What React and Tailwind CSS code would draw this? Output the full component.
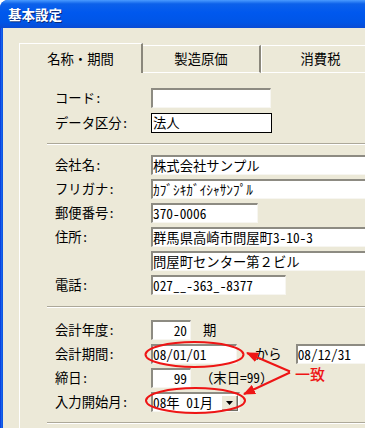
import React from "react";

function Box({ w, children, right = false, flat = false, extra = "" }) {
  const border = flat
    ? "border border-black"
    : "border-t-2 border-l-2 border-r border-b border-t-[#8d8b82] border-l-[#8d8b82] border-r-[#f7f6f1] border-b-[#f7f6f1]";
  return (
    <div
      className={`box-border h-[20px] shrink-0 flex items-center overflow-hidden whitespace-nowrap bg-white leading-none ${border} ${w} ${
        right ? "justify-end pr-[3px]" : flat ? "pl-[1px]" : "pl-0"
      } ${extra}`}
    >
      {children}
    </div>
  );
}

function Row({ label, children }) {
  return (
    <div className="flex items-center h-[20px] pl-[8px] w-[600px]">
      <div className="w-[96px] shrink-0 whitespace-nowrap leading-none">{label}</div>
      {children}
    </div>
  );
}

function Sep({ extra = "" }) {
  return (
    <div className={`h-[2px] border-t border-t-[#aca899] border-b border-b-white w-[400px] ${extra}`} />
  );
}

export default function App() {
  return (
    <div className="relative w-[365px] h-[428px] overflow-hidden bg-white text-black text-[13.33px] font-['Noto_Sans_Mono_CJK_JP','Noto_Sans_CJK_JP',monospace]">
      <div className="flex flex-col h-full rounded-tl-[8px] overflow-hidden bg-[#0a4fe0]">
        <div className="h-[28px] shrink-0 flex items-center pl-[8px] bg-[linear-gradient(to_bottom,#4a9bff_0%,#0c61ea_14%,#0058ee_45%,#0055e6_80%,#0a4bd4_100%)] text-white font-bold text-[13.5px] [text-shadow:1px_1px_0_#0a2a7a]">
          基本設定
        </div>
        <div className="flex flex-1 min-h-0">
          <div className="w-[3px] shrink-0 bg-[linear-gradient(to_right,#0831d9,#1663ea,#0a4fe0)]" />
          <div className="flex-1 min-w-0 bg-[#ece9d8] pl-[16px] pt-[15px] overflow-hidden">
            {/* tabs */}
            <div className="flex items-end h-[30px]">
              <div className="box-border w-[124px] h-[30px] shrink-0 flex items-center justify-center border-t border-l border-white border-r-2 border-r-[#8a877b] bg-[#ece9d8]">
                名称・期間
              </div>
              <div className="box-border w-[118px] h-[28px] shrink-0 flex items-center justify-center border-t border-b border-white border-r-2 border-r-[#8a877b] bg-[#ece9d8]">
                製造原価
              </div>
              <div className="box-border w-[118px] h-[28px] shrink-0 flex items-center justify-center border-t border-b border-l border-white bg-[#ece9d8]">
                消費税
              </div>
            </div>
            {/* panel */}
            <div className="border-l border-white pl-[27px] pt-[15px] h-[400px]">
              <div className="flex flex-col gap-[5px]">
                <Row label="コード:">
                  <Box w="w-[120px]" />
                </Row>
                <Row label="データ区分:">
                  <Box w="w-[121px]" flat>
                    法人
                  </Box>
                </Row>
              </div>
              <Sep extra="mt-[10px]" />
              <div className="flex flex-col gap-[4px] mt-[10px]">
                <Row label="会社名:">
                  <Box w="w-[240px]">株式会社サンプル</Box>
                </Row>
                <Row label="フリガナ:">
                  <Box w="w-[240px]">ｶﾌﾞｼｷｶﾞｲｼｬｻﾝﾌﾟﾙ</Box>
                </Row>
                <Row label="郵便番号:">
                  <Box w="w-[107px]">370-0006</Box>
                </Row>
                <Row label="住所:">
                  <Box w="w-[240px]">群馬県高崎市問屋町3-10-3</Box>
                </Row>
                <Row label="">
                  <Box w="w-[240px]">問屋町センター第２ビル</Box>
                </Row>
                <Row label="電話:">
                  <Box w="w-[135px]">027__-363_-8377</Box>
                </Row>
              </div>
              <Sep extra="mt-[11px]" />
              <div className="flex flex-col gap-[4px] mt-[12px]">
                <Row label="会計年度:">
                  <Box w="w-[40px]" right>
                    20
                  </Box>
                  <span className="ml-[12px] leading-none shrink-0">期</span>
                </Row>
                <Row label="会計期間:">
                  <Box w="w-[86px]">08/01/01</Box>
                  <span className="ml-[18px] leading-none shrink-0 whitespace-nowrap">から</span>
                  <Box w="w-[120px]" extra="ml-[14px]">
                    08/12/31
                  </Box>
                </Row>
                <Row label="締日:">
                  <Box w="w-[40px]" right>
                    99
                  </Box>
                  <span className="ml-[9px] leading-none whitespace-nowrap shrink-0">（末日=99）</span>
                </Row>
                <Row label="入力開始月:">
                  <Box w="w-[89px]" extra="pr-[1px]">
                    <span className="flex-1 leading-none">08年 01月</span>
                    <div className="box-border w-[17px] h-[16px] shrink-0 flex items-center justify-center bg-[#ece9d8] border border-t-white border-l-white border-r-[#716f64] border-b-[#716f64] shadow-[inset_-1px_-1px_0_#aca899]">
                      <svg width="7" height="4" viewBox="0 0 7 4">
                        <path d="M0 0H7L3.5 4Z" fill="#000" />
                      </svg>
                    </div>
                  </Box>
                </Row>
              </div>
              <Sep extra="mt-[10px]" />
            </div>
          </div>
        </div>
      </div>

      {/* annotations */}
      <svg
        className="absolute left-0 top-0 pointer-events-none"
        width="365"
        height="428"
        viewBox="0 0 365 428"
      >
        <defs>
          <marker
            id="ah"
            markerUnits="userSpaceOnUse"
            markerWidth="12"
            markerHeight="10"
            refX="11"
            refY="5"
            orient="auto"
          >
            <path d="M0 0L12 5L0 10Z" fill="#ee1515" />
          </marker>
        </defs>
        <ellipse cx="194.5" cy="354.5" rx="49" ry="12.5" fill="none" stroke="#ee1515" strokeWidth="2" />
        <ellipse cx="195.5" cy="400.5" rx="49.5" ry="12.5" fill="none" stroke="#ee1515" strokeWidth="2" />
        <line x1="290" y1="371.5" x2="247" y2="353" stroke="#ee1515" strokeWidth="2" markerEnd="url(#ah)" />
        <line x1="290" y1="372.5" x2="244" y2="394" stroke="#ee1515" strokeWidth="2" markerEnd="url(#ah)" />
      </svg>
      <span className="absolute left-[295px] top-[366px] text-[15px] leading-[15px] text-[#ee1515] font-['Noto_Sans_CJK_JP',sans-serif] font-medium whitespace-nowrap">
        一致
      </span>
    </div>
  );
}
